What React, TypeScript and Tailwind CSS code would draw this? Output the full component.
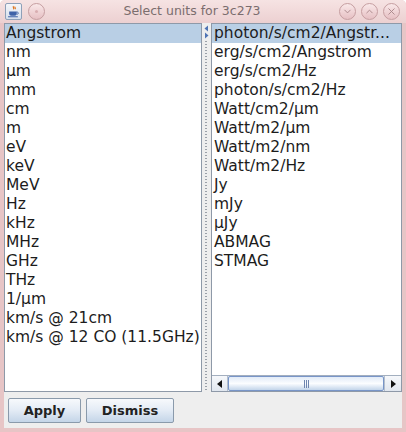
import { ChevronDown, ChevronUp, X } from "lucide-react";

const leftUnits = [
  "Angstrom", "nm", "µm", "mm", "cm", "m", "eV", "keV", "MeV", "Hz", "kHz", "MHz", "GHz", "THz",
  "1/µm", "km/s @ 21cm", "km/s @ 12 CO (11.5GHz)",
];

const rightUnits = [
  "photon/s/cm2/Angstr...", "erg/s/cm2/Angstrom", "erg/s/cm2/Hz", "photon/s/cm2/Hz", "Watt/cm2/µm",
  "Watt/m2/µm", "Watt/m2/nm", "Watt/m2/Hz", "Jy", "mJy", "µJy", "ABMAG", "STMAG",
];

const font = { fontFamily: '"DejaVu Sans", Verdana, sans-serif' };

const UnitList = ({ items, pad }: { items: string[]; pad: string }) => (
  <ul className="flex flex-col">
    {items.map((u, i) => (
      <li
        key={u}
        className={`h-[19px] whitespace-nowrap ${pad} text-[15.5px] leading-[19px] text-[#1c1c1c] ${i === 0 ? "bg-[#b9cfe5]" : ""}`}
      >
        {u}
      </li>
    ))}
  </ul>
);

const TitleCircle = ({ children }: { children?: React.ReactNode }) => (
  <div className="flex h-[17px] w-[17px] items-center justify-center rounded-full border border-[#c59ea1] bg-gradient-to-b from-[#f9e8e9] to-[#e6c0c3] text-[#a98689]">
    {children}
  </div>
);

const Btn = ({ label, w }: { label: string; w: string }) => (
  <button
    className={`${w} h-[25px] rounded-[2px] border border-[#8a9aab] bg-gradient-to-b from-[#f7f9fc] via-[#e3ebf5] to-[#c4d5e8] text-[13px] font-bold text-[#222]`}
  >
    {label}
  </button>
);

export default function App() {
  return (
    <div style={font} className="flex h-[432px] w-[406px] flex-col overflow-hidden rounded-t-[5px] bg-[#e7c5c6]">
      {/* title bar */}
      <div className="flex h-[23px] items-center bg-gradient-to-b from-[#f6e3e3] to-[#ecd0d1] pl-[5px] pr-[6px]">
        <div className="flex h-[17px] w-[17px] items-center justify-center rounded-[2px] border border-[#8ea0b8] bg-gradient-to-b from-[#f4f6fa] to-[#d6dfec]">
          <svg width="13" height="13" viewBox="0 0 12 12">
            <path d="M6 1c-1 1 1 2 0 3M7.5 1.5c-.8.8.8 1.4 0 2.3" stroke="#e0731c" strokeWidth="1.1" fill="none" />
            <path d="M2 6h7v2c0 1.5-1.5 2-3.5 2S2 9.5 2 8z" fill="#3f62a8" />
            <path d="M9 6.5c2 0 2 2 0 2" stroke="#3f62a8" strokeWidth="0.9" fill="none" />
            <path d="M1 10.8h9" stroke="#3f62a8" strokeWidth="1" />
          </svg>
        </div>
        <div className="ml-[6px]">
          <TitleCircle>
            <div className="h-[3px] w-[3px] rounded-full bg-[#d8aeb1]" />
          </TitleCircle>
        </div>
        <div className="flex-1 text-center text-[12.5px] text-[#7b6d6e]">Select units for 3c273</div>
        <div className="flex gap-[5px]">
          <TitleCircle><ChevronDown size={11} strokeWidth={2} /></TitleCircle>
          <TitleCircle><ChevronUp size={11} strokeWidth={2} /></TitleCircle>
          <TitleCircle><X size={11} strokeWidth={2} /></TitleCircle>
        </div>
      </div>

      {/* body */}
      <div className="mx-[4px] mb-[4px] flex flex-1 flex-col bg-[#eeeeee]">
        <div className="flex h-[369px]">
          <div className="w-[198px] overflow-hidden border border-[#8e99a8] bg-white">
            <UnitList items={leftUnits} pad="pl-[1px]" />
          </div>

          {/* split divider */}
          <div className="relative w-[9px]">
            <div className="absolute bottom-0 left-[3px] top-[17px] w-[2px] bg-[radial-gradient(circle,#9aa0a8_0.6px,transparent_0.9px)] bg-[length:2px_3px]" />
            <svg className="absolute left-[1px] top-[2px]" width="7" height="14" viewBox="0 0 7 14">
              <path d="M5 0.5L1.5 3.5L5 6.5z" fill="#4f74b4" />
              <path d="M2 7.5L5.5 10.5L2 13.5z" fill="#4f74b4" />
            </svg>
          </div>

          <div className="flex w-[191px] flex-col overflow-hidden border border-[#8e99a8] bg-white">
            <div className="flex-1 overflow-hidden">
              <UnitList items={rightUnits} pad="pl-[2px]" />
            </div>
            {/* horizontal scrollbar */}
            <div className="flex h-[16px] border-t border-[#a3afbf] bg-gradient-to-b from-[#dbe3ee] to-[#eef2f7]">
              <div className="flex w-[16px] items-center justify-center border-r border-[#b4bfcd] bg-gradient-to-b from-[#f6f8fb] to-[#e1e7ef]">
                <svg width="6" height="8" viewBox="0 0 6 8"><path d="M5 0L0 4L5 8z" fill="#111" /></svg>
              </div>
              <div className="flex flex-1 items-center justify-center rounded-[2px] border border-[#7895c8] bg-gradient-to-b from-[#e2ebf7] via-[#fbfdff] to-[#c3d5ea]">
                <div className="flex gap-[1px]">
                  <div className="h-[8px] w-[1px] bg-[#6f86b0]" />
                  <div className="h-[8px] w-[1px] bg-[#6f86b0]" />
                  <div className="h-[8px] w-[1px] bg-[#6f86b0]" />
                </div>
              </div>
              <div className="flex w-[17px] items-center justify-center border-l border-[#b4bfcd] bg-gradient-to-b from-[#f6f8fb] to-[#e1e7ef]">
                <svg width="6" height="8" viewBox="0 0 6 8"><path d="M1 0L6 4L1 8z" fill="#111" /></svg>
              </div>
            </div>
          </div>
        </div>

        <div className="flex gap-[5px] pl-[4px] pt-[6px]">
          <Btn label="Apply" w="w-[73px]" />
          <Btn label="Dismiss" w="w-[88px]" />
        </div>
      </div>
    </div>
  );
}
